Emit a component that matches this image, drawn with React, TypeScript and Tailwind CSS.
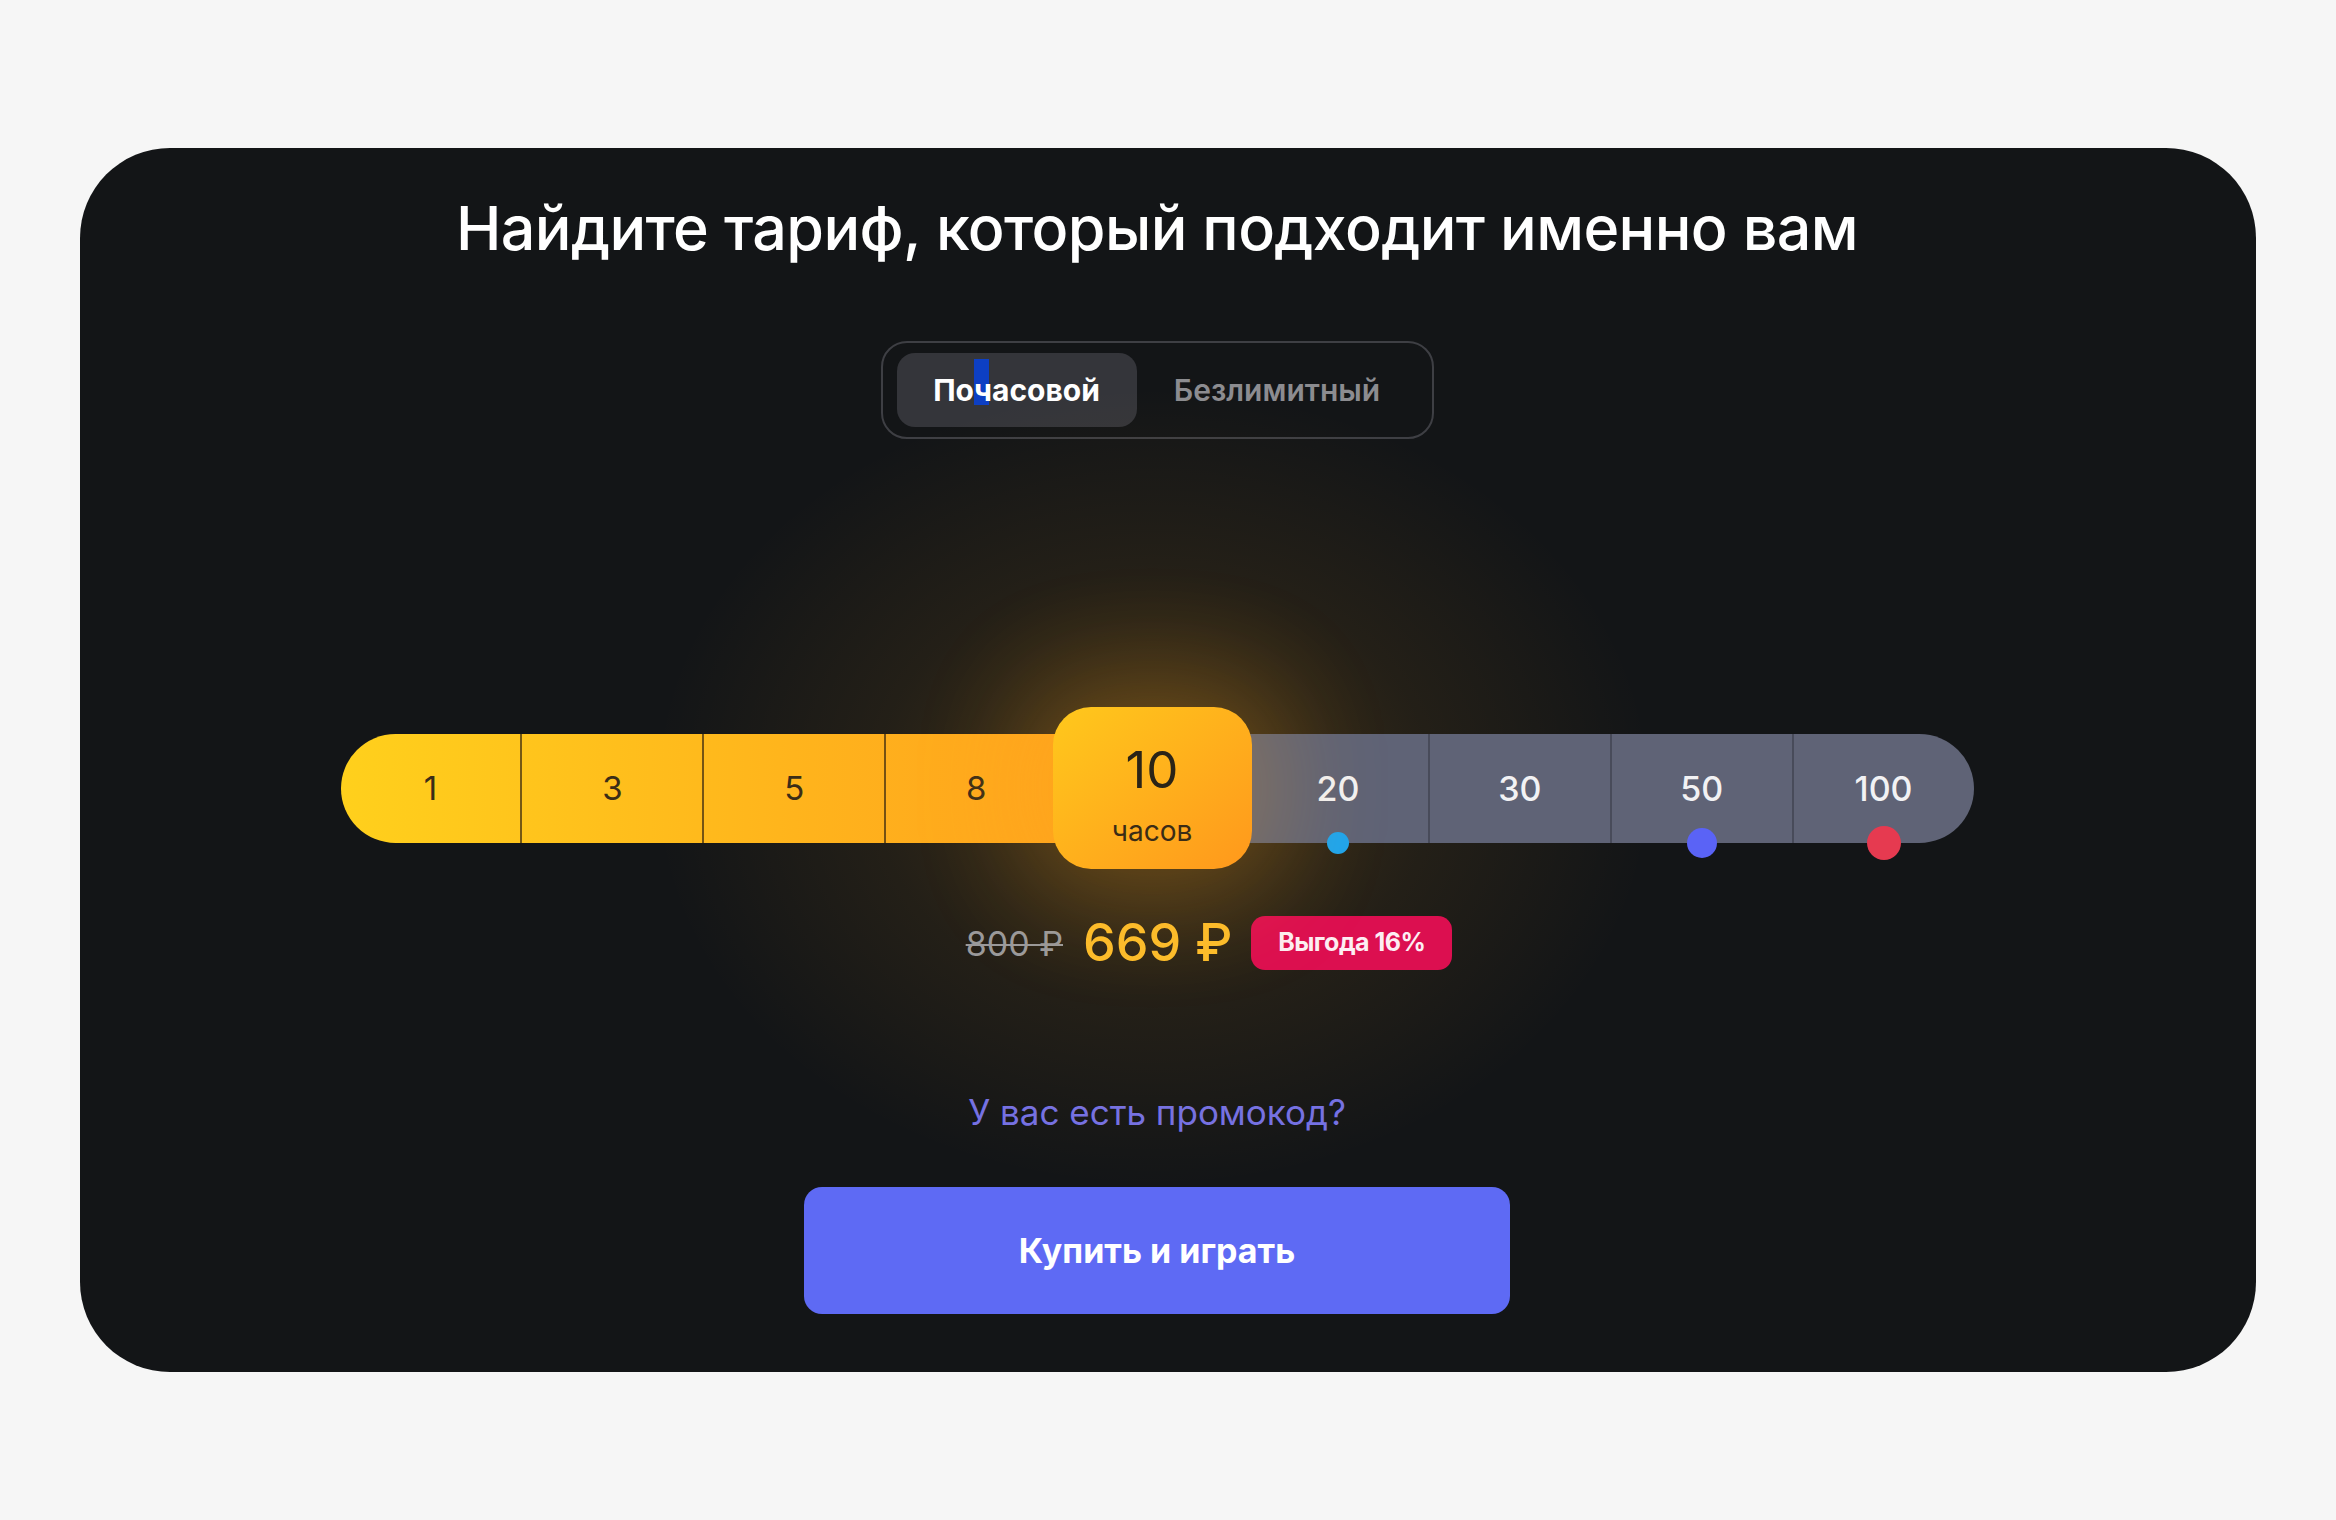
import * as React from 'react';

const FONT = { fontFamily: 'Inter, "Noto Sans", sans-serif' };

type Step = { hours: number; dot?: string };

const STEPS: Step[] = [
  { hours: 1 },
  { hours: 3 },
  { hours: 5 },
  { hours: 8 },
  { hours: 10 },
  { hours: 20, dot: 'w-[22px] h-[22px] bg-[#1ea5ee]' },
  { hours: 30 },
  { hours: 50, dot: 'w-[30px] h-[30px] bg-[#5a63f6]' },
  { hours: 100, dot: 'w-[34px] h-[34px] bg-[#e63a50]' },
];

const SELECTED = 4;

function HoursSlider() {
  const warm = STEPS.slice(0, SELECTED + 1);
  const cold = STEPS.slice(SELECTED + 1);

  return (
    <div className="relative h-[162px] w-[1633px] pt-[27px]">
      {/* soft glow behind the selected step */}
      <div className="absolute left-[312px] top-[-320px] h-[800px] w-[1000px] bg-[radial-gradient(closest-side,rgba(255,168,28,0.22),rgba(255,168,28,0.07)_55%,transparent)]" />

      <div className="relative z-10 flex h-[109px]">
        <div className="flex w-[907.5px] rounded-l-full bg-gradient-to-r from-[#ffd01c] via-[#ffb41c] to-[#ff9a1e]">
          {warm.map((s, i) => (
            <div
              key={s.hours}
              className={
                'flex flex-1 items-center justify-center text-[33px] text-[#3b2d17] ' +
                (i > 0 ? 'border-l-2 border-[#3a2a10]/70' : '')
              }
            >
              {i === SELECTED ? '' : s.hours}
            </div>
          ))}
        </div>
        <div className="flex flex-1 rounded-r-full bg-[#5f6376]">
          {cold.map((s, i) => (
            <div
              key={s.hours}
              className={
                'relative flex flex-1 items-center justify-center text-[34px] font-medium text-[#f2f2f4] ' +
                (i > 0 ? 'border-l-2 border-[#484b5a]' : '')
              }
            >
              {s.hours}
              {s.dot && (
                <span
                  className={
                    'absolute bottom-0 left-1/2 -translate-x-1/2 translate-y-1/2 rounded-full ' + s.dot
                  }
                />
              )}
            </div>
          ))}
        </div>
      </div>

      {/* selected step pill */}
      <div className="absolute left-[712px] top-0 z-20 flex h-[162px] w-[199px] flex-col items-center rounded-[38px] bg-gradient-to-br from-[#ffc81c] to-[#ff981c] shadow-[0_0_110px_30px_rgba(255,168,30,0.24)]">
        <div className="mt-[37px] text-[51px] leading-none text-[#2b2417]">10</div>
        <div className="mt-[22px] text-[28px] leading-none text-[#3a2c16]">часов</div>
      </div>
    </div>
  );
}

export default function App() {
  const [tab, setTab] = React.useState<'hourly' | 'unlimited'>('hourly');

  return (
    <div className="min-h-screen bg-[#f6f6f6] px-[80px] pt-[148px]" style={FONT}>
      <div className="flex h-[1224px] w-full flex-col items-center overflow-hidden rounded-[90px] bg-[#131517] pr-[22px]">
        <h1 className="mt-[50px] text-[61px] font-medium leading-none tracking-[-0.01em] text-white">
          Найдите тариф, который подходит именно вам
        </h1>

        {/* tariff type switch */}
        <div className="mt-[82px] flex h-[98px] w-[553px] items-center rounded-[26px] border-2 border-[#3e3f44] px-[14px] py-[9px]">
          <button
            onClick={() => setTab('hourly')}
            className={
              'flex h-[74px] w-[240px] items-center justify-center rounded-[18px] text-[30px] font-bold ' +
              (tab === 'hourly' ? 'bg-[#34353a] text-white' : 'text-[#8c8c90]')
            }
          >
            По
            <span className="relative">
              <span className="absolute left-0 top-[-9px] h-[46px] w-[15px] bg-[#0d3fc3]" />
              <span className="relative">ч</span>
            </span>
            асовой
          </button>
          <button
            onClick={() => setTab('unlimited')}
            className={
              'flex h-[74px] flex-1 items-center justify-center rounded-[18px] text-[30px] font-semibold ' +
              (tab === 'unlimited' ? 'bg-[#34353a] text-white' : 'text-[#8c8c90]')
            }
          >
            Безлимитный
          </button>
        </div>

        <div className="mt-[268px]">
          <HoursSlider />
        </div>

        <div className="relative z-10 ml-[104px] mt-[47px] flex h-[54px] items-center">
          <span className="text-[34px] text-[#9a9a9c] line-through decoration-2">800 ₽</span>
          <span className="ml-[20px] text-[52px] font-medium leading-none text-[#fcbd2c]">669 ₽</span>
          <span className="ml-[19px] flex h-[54px] w-[201px] items-center justify-center rounded-[14px] bg-[#dc0f50] text-[25px] font-bold tracking-[-0.02em] text-[#fdeef3]">
            Выгода 16%
          </span>
        </div>

        <a className="mt-[122px] text-[35px] leading-[40px] text-[#7370e6]">У вас есть промокод?</a>

        <button className="mt-[55px] h-[127px] w-[706px] rounded-[18px] bg-[#5e6af4] text-[34px] font-bold text-white">
          Купить и играть
        </button>
      </div>
    </div>
  );
}
